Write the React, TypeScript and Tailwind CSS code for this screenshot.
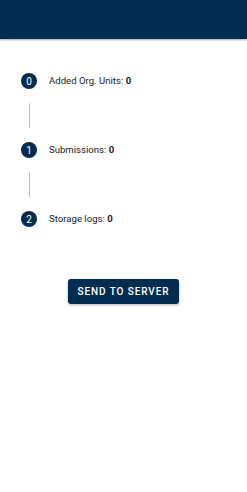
const steps = [
  { n: 0, label: "Added Org. Units:", value: 0 },
  { n: 1, label: "Submissions:", value: 0 },
  { n: 2, label: "Storage logs:", value: 0 },
];

export default function App() {
  return (
    <div className="w-[247px] h-[492px] bg-white font-['Roboto',sans-serif] text-[#222]">
      <div className="h-[39px] bg-[#022d50] shadow-[0_1px_2px_rgba(0,0,0,0.35)]" />

      <div className="pl-[21px] pt-[34px]">
        {steps.map((s, i) => (
          <div key={s.n}>
            <div className="flex items-center h-[16px]">
              <div className="w-[16px] h-[16px] rounded-full bg-[#022d50] text-white text-[10px] flex items-center justify-center">
                {s.n}
              </div>
              <span className="ml-[12px] text-[9.6px]">
                {s.label} <b className="font-bold">{s.value}</b>
              </span>
            </div>
            {i < steps.length - 1 && (
              <div className="h-[53px] flex flex-col justify-center pl-[8px]">
                <div className="w-px h-[25px] bg-[#bdbdbd]" />
              </div>
            )}
          </div>
        ))}
      </div>

      <div className="flex justify-center mt-[52px]">
        <button className="h-[25px] w-[111px] rounded-[3px] bg-[#022d50] text-white text-[10px] font-medium tracking-[0.09em] shadow-[0_1px_3px_rgba(0,0,0,0.3)]">
          SEND TO SERVER
        </button>
      </div>
    </div>
  );
}
